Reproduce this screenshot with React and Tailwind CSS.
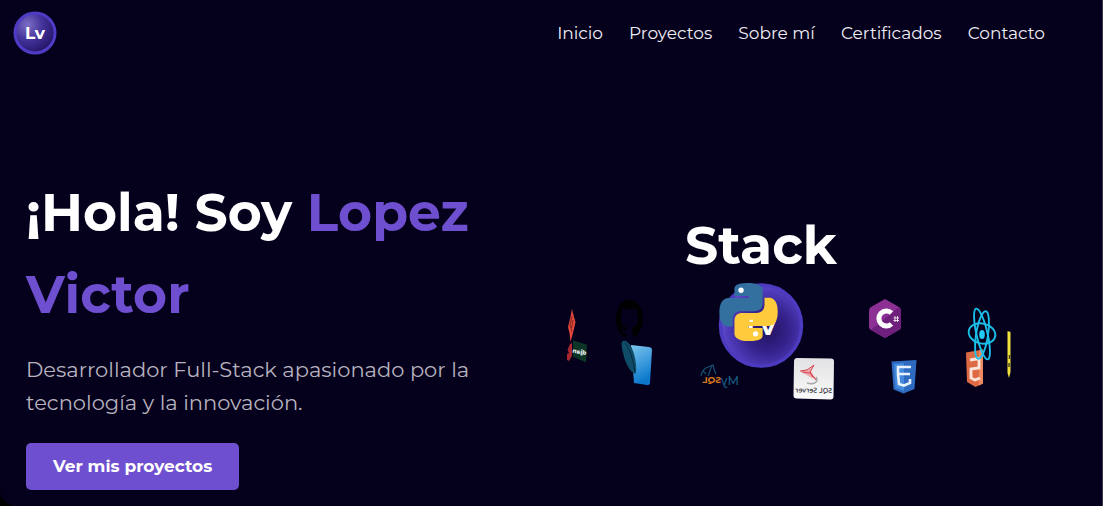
import React from "react";

const links = [
  { label: "Inicio", href: "#inicio" },
  { label: "Proyectos", href: "#proyectos" },
  { label: "Sobre mí", href: "#sobre-mi" },
  { label: "Certificados", href: "#certificados" },
  { label: "Contacto", href: "#contacto" },
];

const PYTHON_HALF =
  "M14.25.18l.9.2.73.26.59.3.45.32.34.34.25.34.16.33.1.3.04.26.02.2-.01.13V8.5l-.05.63-.13.55-.21.46-.26.38-.3.31-.33.25-.35.19-.35.14-.33.1-.3.07-.26.04-.21.02H8.77l-.69.05-.59.14-.5.22-.41.27-.33.32-.27.35-.2.36-.15.37-.1.35-.07.32-.04.27-.02.21v3.06H3.17l-.21-.03-.28-.07-.32-.12-.35-.18-.36-.26-.36-.36-.35-.46-.32-.59-.28-.73-.21-.88-.14-1.05-.05-1.23.06-1.22.16-1.04.24-.87.32-.71.36-.57.4-.44.42-.33.42-.24.4-.16.36-.1.32-.05.24-.01h.16l.06.01h8.16v-.83H6.18l-.01-2.75-.02-.37.05-.34.11-.31.17-.28.25-.26.31-.23.38-.2.44-.18.51-.15.58-.12.64-.1.71-.06.77-.04.84-.02 1.27.05z";

const GITHUB =
  "M12 .297c-6.63 0-12 5.373-12 12 0 5.303 3.438 9.8 8.205 11.385.6.113.82-.258.82-.577 0-.285-.01-1.04-.015-2.04-3.338.724-4.042-1.61-4.042-1.61C4.422 18.07 3.633 17.7 3.633 17.7c-1.087-.744.084-.729.084-.729 1.205.084 1.838 1.236 1.838 1.236 1.07 1.835 2.809 1.305 3.495.998.108-.776.417-1.305.76-1.605-2.665-.3-5.466-1.332-5.466-5.93 0-1.31.465-2.38 1.235-3.22-.135-.303-.54-1.523.105-3.176 0 0 1.005-.322 3.3 1.23.96-.267 1.98-.399 3-.405 1.02.006 2.04.138 3 .405 2.28-1.552 3.285-1.23 3.285-1.23.645 1.653.24 2.873.12 3.176.765.84 1.23 1.91 1.23 3.22 0 4.61-2.805 5.625-5.475 5.92.42.36.81 1.096.81 2.22 0 1.606-.015 2.896-.015 3.286 0 .315.21.69.825.57C20.565 22.092 24 17.592 24 12.297c0-6.627-5.373-12-12-12";

function Logo() {
  return (
    <svg viewBox="0 0 44 44" className="size-11" role="img" aria-label="Lv">
      <defs>
        <radialGradient id="logo" cx="0.32" cy="0.3" r="0.75">
          <stop offset="0" stopColor="#7d6fc4" />
          <stop offset="0.5" stopColor="#43329a" />
          <stop offset="1" stopColor="#241566" />
        </radialGradient>
      </defs>
      <circle cx="22" cy="22" r="20" fill="url(#logo)" stroke="#4f3cc6" strokeWidth="3" />
      <text x="22" y="28" textAnchor="middle" fontSize="17" fontWeight="700" fill="#fff">
        Lv
      </text>
    </svg>
  );
}

// Technology logos revolving around the sphere, drawn in perspective.
function Orbit() {
  return (
    <svg viewBox="551 280 420 126" className="w-full overflow-visible" role="img" aria-label="Tecnologías">
      <defs>
        <radialGradient id="sphere" cx="0.58" cy="0.56" r="0.6">
          <stop offset="0" stopColor="#22135f" />
          <stop offset="0.45" stopColor="#35228c" />
          <stop offset="0.8" stopColor="#4f3bba" />
          <stop offset="1" stopColor="#6450cc" />
        </radialGradient>
        <linearGradient id="panel" x1="0" y1="0" x2="0.3" y2="1">
          <stop offset="0" stopColor="#7cc6ee" />
          <stop offset="1" stopColor="#0b78cc" />
        </linearGradient>
        <linearGradient id="card" x1="0" y1="0" x2="0" y2="1">
          <stop offset="0" stopColor="#e2e2e4" />
          <stop offset="1" stopColor="#fafafa" />
        </linearGradient>
      </defs>

      {/* sphere */}
      <circle cx="761" cy="325.5" r="40.5" fill="url(#sphere)" stroke="#4c3abf" strokeWidth="3.5" />
      <text x="761" y="335" textAnchor="middle" fontSize="25" fontWeight="700" fill="#fff">
        Lv
      </text>

      {/* Python */}
      <g transform="translate(719.5 283) scale(2.42)">
        <path d={PYTHON_HALF} fill="#33709f" />
        <path d={PYTHON_HALF} fill="#fdcb3c" transform="rotate(180 12 12)" />
        <circle cx="8.9" cy="3" r="1.1" fill="#fff" />
        <circle cx="14.9" cy="21" r="1.1" fill="#fff" />
        <path d="M12.4 15.6h1.4" stroke="#fff" strokeWidth="0.8" />
      </g>

      {/* Git and Angular */}
      <path d="M572 309l2 8 1.500 5-2 9-3 11-1-9-1.500-6 2-8z" fill="#e2483b" />
      <path d="M572 316l-2 9 2 7M573 320l-1.500 8" stroke="#5f1519" strokeWidth="0.7" fill="none" />
      <path d="M570 344l2-1v13l-3 5-2-1v-6l2-1-1.500-3z" fill="#a82730" />

      {/* Django */}
      <path d="M573 340.500l14 4-1 18-13-6z" fill="#0c3527" />
      <text transform="translate(586 355) rotate(10) scale(-1 1)" fontSize="6" fontWeight="800" fill="#e8efec">
        djan
      </text>

      {/* GitHub */}
      <path d={GITHUB} transform="translate(616 299) scale(1.12 1.62)" fill="#000" />

      {/* blue panel */}
      <path d="M631 345l18 2q3 .5 3 3l-2 33q0 2-3 2l-13-2z" fill="url(#panel)" />
      <path d="M623 341c5-2 10 7 12 17s1 17 0 16c-6-3-10-12-12-21s-2-11 0-12z" fill="#0f4c68" />
      <path d="M625 343c5 5 8 17 10 29" stroke="#082c43" strokeWidth="1" fill="none" />

      {/* MySQL */}
      <g fill="none" stroke="#17506f" strokeWidth="1.200">
        <path d="M701 376c1-5 4-8 7-9l5-2c1 3 1 6 3 9" />
        <path d="M712 366c-2 3-2 6-4 10M703 371l3 3" />
      </g>
      <g transform="translate(739 385) scale(-1 1)" fontSize="12">
        <text fontWeight="500" fill="#155f84">My</text>
        <text x="18" y="-2" fontSize="9" fontWeight="700" fill="#d5781c">
          SQL
        </text>
      </g>

      {/* SQL Server */}
      <path d="M797 358l34 .5q3 0 3 3l-.5 35q0 3-3 3l-34-1q-3 0-3-3l.5-34q0-3.500 3-3.500z" fill="url(#card)" />
      <path d="M800 371l10-2 4-4-3 6 2 4 5 6-8-4-7-4z" fill="#f0aaae" />
      <path d="M800 371l7-1 7-5-4 7 3 4 3 4M802 372l8 1 3 4" stroke="#d2454f" strokeWidth="1" fill="none" />
      <path d="M807 383c7 2 12-1 9-6" stroke="#a9a9ad" strokeWidth="1.500" fill="none" />
      <text
        transform="translate(832 393) rotate(1) scale(-1 1)"
        fontFamily="Open Sans, sans-serif"
        fontSize="7"
        fontWeight="600"
        fill="#333336"
      >
        SQL Server
      </text>

      {/* C# */}
      <path d="M885 299l14 8q2 1 2 4v16q0 2-2 3l-14 8-14-8q-2-1-2-3v-16q0-3 2-4z" fill="#8c3094" />
      <path d="M899 307q2 1 2 4v16q0 2-2 3l-14 8-14-8 28-23z" fill="#6f1f7c" />
      <path d="M891.500 313a7.500 7.500 0 1 0 0 11" fill="none" stroke="#fff" strokeWidth="5" />
      <path d="M895 316v6M897.500 316v6M893.500 318h5.500M893.500 320.500h5.500" stroke="#fff" strokeWidth="0.8" />

      {/* CSS */}
      <path d="M891.500 361.500l25-1.500-2 29-11 4.500-10-4z" fill="#2e6bc0" />
      <path d="M894 364l10-1v28l-8.500-3z" fill="#4389dc" />
      <path d="M911 367h-13v7h12M898 374l1 10 5 1.500 6-2.500v-4" fill="none" stroke="#e8f2ff" strokeWidth="2.600" />

      {/* HTML */}
      <path d="M966 352.500l17-3v34l-7.500 3.500-8.500-5z" fill="#dd6a43" />
      <path d="M979 350.500l4-1v34l-4 2z" fill="#ee8a61" />
      <path d="M970 360l9-1.500v9.500l-8 1v9l4 2 5-2" fill="none" stroke="#fbe4da" strokeWidth="2.800" />

      {/* React */}
      <g fill="none" stroke="#1bbfe8" strokeWidth="1.900">
        <ellipse cx="982" cy="333.500" rx="13.500" ry="10" transform="rotate(14 982 333.500)" />
        <ellipse cx="982" cy="334" rx="5.500" ry="26" transform="rotate(-13 982 334)" />
        <ellipse cx="982" cy="335" rx="6" ry="24" transform="rotate(9 982 335)" />
      </g>
      <ellipse cx="982" cy="334.500" rx="2.800" ry="4.500" fill="#22c9f2" />

      {/* JavaScript */}
      <path d="M1007.500 331l3 1v40l-1.500 6-1.500-5z" fill="#f1e13c" />
      <path d="M1009.500 355v4M1009 363v4" stroke="#4b4520" strokeWidth="1.500" />
    </svg>
  );
}

export default function App() {
  return (
    <div className="bg-black">
      <div className="flex min-h-screen flex-col rounded-bl-[16px] border-r border-[#3b3648] bg-[#05001c] font-[Montserrat,Inter,sans-serif] text-white">
        <header className="flex items-center justify-between pt-[11px] pr-[57px] pl-[13px]">
          <a href="#inicio">
            <Logo />
          </a>
          <nav className="flex gap-[26px] pt-[2px] text-[17px] text-[#f0eef5]">
            {links.map((l) => (
              <a key={l.href} href={l.href}>
                {l.label}
              </a>
            ))}
          </nav>
        </header>
        <main className="grid grid-cols-2 items-start px-[26px] pt-[117px]">
          <section>
            <h1 className="text-[52px] leading-[82px] font-bold">
              ¡Hola! Soy <span className="text-[#6e4fcf]">Lopez</span>{" "}
              <span className="text-[#6e4fcf]">Victor</span>
            </h1>
            <p className="mt-[17px] text-[21px] leading-[33px] text-[#b6b3bf]">
              Desarrollador Full-Stack apasionado por la tecnología y la innovación.
            </p>
            <button
              type="button"
              className="mt-6 h-[47px] rounded-[5px] bg-[#6e4fcf] px-[27px] text-[17px] font-bold"
            >
              Ver mis proyectos
            </button>
          </section>
          <section className="flex flex-col items-center pt-[34px] pr-[20%]">
            <h2 className="text-[52px] leading-[80px] font-bold">Stack</h2>
            <div className="-mt-[6px] w-full">
              <Orbit />
            </div>
          </section>
        </main>
      </div>
    </div>
  );
}
